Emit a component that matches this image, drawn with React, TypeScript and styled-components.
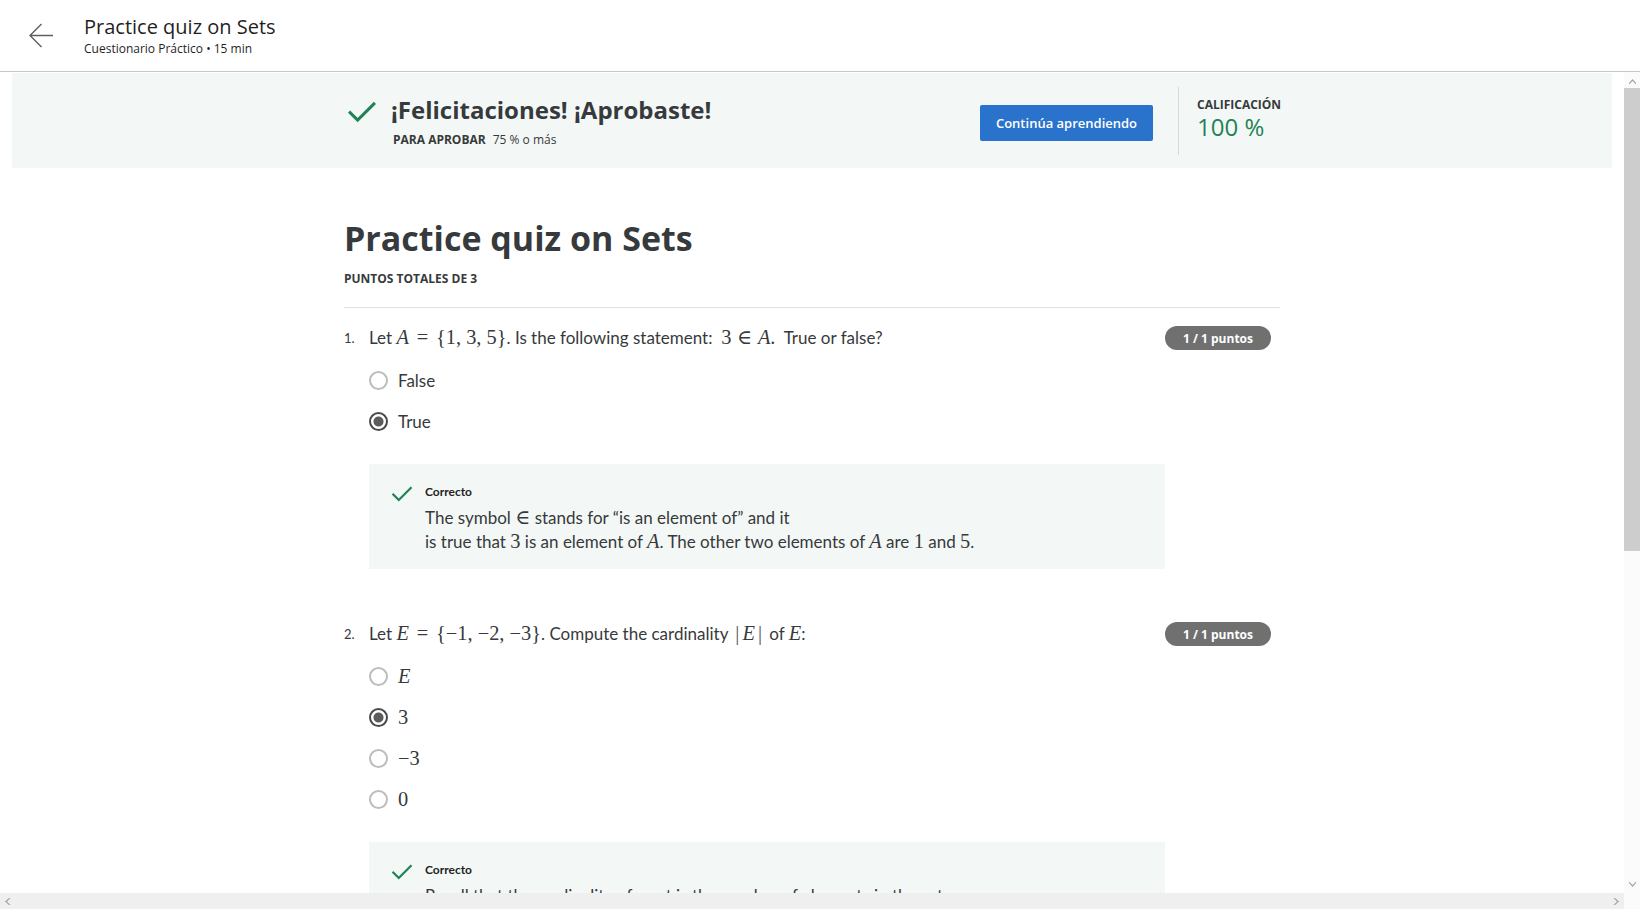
import styled, { createGlobalStyle } from "styled-components";

const GlobalStyle = createGlobalStyle`
  html, body {
    margin: 0;
    padding: 0;
    overflow: hidden;
    background: #fff;
  }
  body {
    font-family: "Open Sans", "Liberation Sans", sans-serif;
    color: #1f1f1f;
  }
  * {
    box-sizing: border-box;
  }
`;

const Page = styled.div`
  height: 909px;
  display: flex;
  flex-direction: column;
`;

const TopBar = styled.header`
  height: 72px;
  flex: none;
  display: flex;
  align-items: center;
  padding-left: 28px;
  border-bottom: 1px solid #c6c6c6;
`;

const BackIcon = styled.svg`
  width: 27px;
  height: 27px;
  stroke: #5f5f5f;
  stroke-width: 1.4;
  fill: none;
`;

const TitleBlock = styled.div`
  margin-left: 29px;
`;

const TopTitle = styled.div`
  font-size: 20px;
  line-height: 26px;
  color: #1f1f1f;
`;

const TopMeta = styled.div`
  font-size: 12px;
  line-height: 16px;
  margin-top: 1px;
  color: #1f1f1f;
`;

const Viewport = styled.div`
  flex: 1;
  min-height: 0;
  display: flex;
`;

const Scroller = styled.main`
  flex: 1;
  min-width: 0;
  overflow: hidden;
`;

const VTrack = styled.div`
  width: 16px;
  flex: none;
  display: flex;
  flex-direction: column;
  background: #fbfbfb;
`;

const ArrowBox = styled.div`
  height: 16px;
  flex: none;
  display: flex;
  align-items: center;
  justify-content: center;
  svg {
    width: 9px;
    height: 9px;
    fill: #a3a3a3;
  }
`;

const VThumb = styled.div`
  height: 463px;
  flex: none;
  background: #cdcdcd;
`;

const VFill = styled.div`
  flex: 1;
`;

const HRow = styled.div`
  height: 16px;
  flex: none;
  display: flex;
`;

const HTrack = styled.div`
  flex: 1;
  display: flex;
  justify-content: space-between;
  align-items: center;
  background: #efefef;
  padding: 0 3px;
`;

const Corner = styled.div`
  width: 16px;
  background: #fbfbfb;
`;

const Banner = styled.section`
  margin: 1px 12px 0;
  height: 95px;
  background: #f3f8f6;
`;

const BannerInner = styled.div`
  width: 936px;
  height: 100%;
  margin: 0 auto;
  display: flex;
  align-items: center;
`;

const CheckIcon = styled.svg<{ $size: number }>`
  width: ${(p) => p.$size}px;
  height: ${(p) => p.$size}px;
  flex: none;
  fill: none;
  stroke: #1f8354;
  stroke-width: 2.4;
  stroke-linecap: square;
`;

const BannerCheck = styled.div`
  align-self: flex-start;
  margin: 24px 0 0 3px;
  display: flex;
`;

const BannerText = styled.div`
  flex: 1;
  margin-left: 14px;
  margin-top: 2px;
`;

const BannerTitle = styled.h2`
  margin: 0;
  font-size: 24px;
  line-height: 30px;
  font-weight: 700;
  color: #373a3c;
`;

const PassLine = styled.div`
  margin-top: 7px;
  margin-left: 2px;
  font-size: 12px;
  line-height: 16px;
  color: #373a3c;
  display: flex;
  gap: 7px;
`;

const Strong = styled.span`
  font-weight: 700;
`;

const PrimaryButton = styled.button`
  width: 173px;
  height: 36px;
  border: none;
  border-radius: 2px;
  background: #2a73cc;
  color: #fff;
  font-family: inherit;
  font-size: 13px;
  font-weight: 600;
  margin-top: 4px;
`;

const Divider = styled.div`
  width: 1px;
  height: 68px;
  margin: 0 18px 0 25px;
  background: #dadada;
`;

const Grade = styled.div`
  width: 83px;
  margin-top: -4px;
`;

const GradeLabel = styled.div`
  font-size: 12px;
  line-height: 16px;
  font-weight: 700;
  color: #373a3c;
`;

const GradeValue = styled.div`
  font-size: 24px;
  line-height: 28px;
  color: #1f8354;
`;

const Column = styled.div`
  width: 936px;
  margin: 0 auto;
`;

const QuizTitle = styled.h1`
  margin: 47px 0 0;
  font-size: 34px;
  line-height: 46px;
  font-weight: 700;
  color: #373a3c;
`;

const TotalPoints = styled.div`
  margin-top: 9px;
  font-size: 12px;
  line-height: 18px;
  font-weight: 700;
  color: #373a3c;
  padding-bottom: 19px;
  border-bottom: 1px solid #e1e1e1;
`;

const Question = styled.section`
  display: flex;
  padding: 18px 0 35px;
  font-family: "Lato", "Liberation Sans", sans-serif;
  color: #373a3c;
`;

const Number = styled.div`
  width: 25px;
  flex: none;
  font-size: 13px;
  line-height: 24px;
`;

const Body = styled.div`
  flex: 1;
  min-width: 0;
`;

const Prompt = styled.div`
  font-size: 17px;
  line-height: 24px;
`;

const Badge = styled.div`
  flex: none;
  width: 106px;
  height: 24px;
  margin-right: 9px;
  border-radius: 12px;
  background: #707070;
  color: #fff;
  font-family: "Open Sans", "Liberation Sans", sans-serif;
  font-size: 12px;
  font-weight: 700;
  display: flex;
  align-items: center;
  justify-content: center;
`;

const Options = styled.div`
  margin-top: 10px;
`;

const Option = styled.label`
  height: 41px;
  display: flex;
  align-items: center;
  font-size: 17px;
`;

const Radio = styled.span<{ $checked?: boolean }>`
  width: 19px;
  height: 19px;
  flex: none;
  margin-right: 10px;
  border-radius: 50%;
  border: 2px solid ${(p) => (p.$checked ? "#4a4a4a" : "#bdbdbd")};
  background: ${(p) =>
    p.$checked ? "radial-gradient(circle, #5c5c5c 0 4.5px, #fff 5.5px)" : "#fff"};
`;

const Feedback = styled.div`
  margin-top: 22px;
  background: #f3f8f6;
  padding: 19px 24px 15px 22px;
  display: flex;
  gap: 12px;
`;

const FeedbackText = styled.div`
  font-size: 17px;
  line-height: 24px;
`;

const FeedbackLabel = styled.div`
  font-size: 12px;
  line-height: 18px;
  font-weight: 700;
  margin-bottom: 5px;
  color: #1f1f1f;
`;

const M = styled.span`
  font-family: "Liberation Serif", "DejaVu Serif", serif;
  font-size: 1.2em;
  line-height: 1;
`;

const V = styled(M)`
  font-style: italic;
`;

const Rel = styled(M)<{ $wide?: boolean }>`
  margin: 0 ${(p) => (p.$wide ? "0.38em" : "0.28em")};
`;

const Bar = styled(M)`
  margin: 0 3px;
  color: #555;
`;

const Check = ({ size }: { size: number }) => (
  <CheckIcon $size={size} viewBox="0 0 24 24">
    <polyline points="2.5,12.5 8.5,18.5 21.5,5.5" />
  </CheckIcon>
);

function Chevron({ dir }: { dir: "up" | "down" | "left" | "right" }) {
  const pts = {
    up: "1,7 4.5,3 8,7 8,8.5 4.5,5 1,8.5",
    down: "1,2 4.5,6 8,2 8,0.5 4.5,4 1,0.5",
    left: "6,1 2,4.5 6,8 7.5,8 4,4.5 7.5,1",
    right: "3,1 7,4.5 3,8 1.5,8 5,4.5 1.5,1",
  }[dir];
  return (
    <svg viewBox="0 0 9 9">
      <polygon points={pts} />
    </svg>
  );
}

export default function App() {
  return (
    <Page>
      <GlobalStyle />
      <TopBar>
        <BackIcon viewBox="0 0 27 27">
          <path d="M25 13.5H2M13.5 2L2 13.5L13.5 25" />
        </BackIcon>
        <TitleBlock>
          <TopTitle>Practice quiz on Sets</TopTitle>
          <TopMeta>Cuestionario Práctico • 15 min</TopMeta>
        </TitleBlock>
      </TopBar>

      <Viewport>
        <Scroller>
          <Banner>
            <BannerInner>
              <BannerCheck>
                <Check size={30} />
              </BannerCheck>
              <BannerText>
                <BannerTitle>¡Felicitaciones! ¡Aprobaste!</BannerTitle>
                <PassLine>
                  <Strong>PARA APROBAR</Strong>
                  <span>75 % o más</span>
                </PassLine>
              </BannerText>
              <PrimaryButton>Continúa aprendiendo</PrimaryButton>
              <Divider />
              <Grade>
                <GradeLabel>CALIFICACIÓN</GradeLabel>
                <GradeValue>100 %</GradeValue>
              </Grade>
            </BannerInner>
          </Banner>

          <Column>
            <QuizTitle>Practice quiz on Sets</QuizTitle>
            <TotalPoints>PUNTOS TOTALES DE 3</TotalPoints>

            <Question>
              <Number>1.</Number>
              <Body>
                <Prompt>
                  Let <V>A</V>
                  <Rel $wide>=</Rel>
                  <M>{"{1, 3, 5}"}</M>. Is the following statement:&nbsp; <M>3</M>
                  <Rel>∈</Rel>
                  <V>A</V>
                  <M>.</M>&nbsp; True or false?
                </Prompt>
                <Options>
                  <Option>
                    <Radio />
                    False
                  </Option>
                  <Option>
                    <Radio $checked />
                    True
                  </Option>
                </Options>
                <Feedback>
                  <Check size={22} />
                  <FeedbackText>
                    <FeedbackLabel>Correcto</FeedbackLabel>
                    The symbol <M>∈</M> stands for “is an element of” and it
                    <br />
                    is true that <M>3</M> is an element of <V>A</V>. The other
                    two elements of <V>A</V> are <M>1</M> and <M>5</M>.
                  </FeedbackText>
                </Feedback>
              </Body>
              <Badge>1 / 1 puntos</Badge>
            </Question>

            <Question>
              <Number>2.</Number>
              <Body>
                <Prompt>
                  Let <V>E</V>
                  <Rel $wide>=</Rel>
                  <M>{"{−1, −2, −3}"}</M>. Compute the cardinality{" "}
                  <Bar>|</Bar>
                  <V>E</V>
                  <Bar>|</Bar> of <V>E</V>:
                </Prompt>
                <Options>
                  <Option>
                    <Radio />
                    <V>E</V>
                  </Option>
                  <Option>
                    <Radio $checked />
                    <M>3</M>
                  </Option>
                  <Option>
                    <Radio />
                    <M>−3</M>
                  </Option>
                  <Option>
                    <Radio />
                    <M>0</M>
                  </Option>
                </Options>
                <Feedback>
                  <Check size={22} />
                  <FeedbackText>
                    <FeedbackLabel>Correcto</FeedbackLabel>
                    Recall that the cardinality of a set is the number of
                    elements in the set.
                  </FeedbackText>
                </Feedback>
              </Body>
              <Badge>1 / 1 puntos</Badge>
            </Question>
          </Column>
        </Scroller>
        <VTrack>
          <ArrowBox>
            <Chevron dir="up" />
          </ArrowBox>
          <VThumb />
          <VFill />
          <ArrowBox>
            <Chevron dir="down" />
          </ArrowBox>
        </VTrack>
      </Viewport>

      <HRow>
        <HTrack>
          <ArrowBox>
            <Chevron dir="left" />
          </ArrowBox>
          <ArrowBox>
            <Chevron dir="right" />
          </ArrowBox>
        </HTrack>
        <Corner />
      </HRow>
    </Page>
  );
}
